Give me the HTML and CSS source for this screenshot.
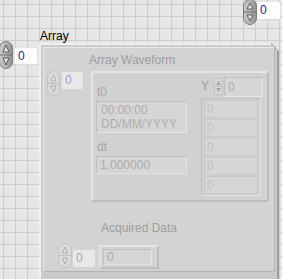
FILE: index.html
```html
<!DOCTYPE html>
<html>
<head>
<meta charset="utf-8">
<link rel="stylesheet" href="styles.css">
</head>
<body>
<div class="panel">
  <div class="ctl num-top">
    <svg class="spin" width="14" height="26" viewBox="0 0 14 26">
      <defs>
        <linearGradient id="g1" x1="0" x2="1" y1="0" y2="0">
          <stop offset="0" stop-color="#c8c8c8"/>
          <stop offset="0.5" stop-color="#b4b4b4"/>
          <stop offset="1" stop-color="#8e8e8e"/>
        </linearGradient>
      </defs>
      <rect x="0.5" y="0.5" width="13" height="25" rx="6.5" fill="url(#g1)" stroke="#7c7c7c"/>
      <line x1="1" y1="13" x2="13" y2="13" stroke="#6e6e6e"/>
      <path d="M7 4 L10 10 L4 10 Z" fill="#e4e4e4" stroke="#505050" stroke-width="0.9"/>
      <path d="M7 22 L10 16 L4 16 Z" fill="#e4e4e4" stroke="#505050" stroke-width="0.9"/>
    </svg>
    <div class="box on">0</div>
  </div>

  <div class="ctl arr">
    <div class="arr-label">Array</div>
    <div class="arr-row">
      <div class="idx">
        <svg class="spin" width="14" height="28" viewBox="0 0 14 28">
          <rect x="0.5" y="0.5" width="13" height="27" rx="6.5" fill="url(#g1)" stroke="#7c7c7c"/>
          <line x1="1" y1="14" x2="13" y2="14" stroke="#6e6e6e"/>
          <path d="M7 4 L10 11 L4 11 Z" fill="#e4e4e4" stroke="#505050" stroke-width="0.9"/>
          <path d="M7 24 L10 17 L4 17 Z" fill="#e4e4e4" stroke="#505050" stroke-width="0.9"/>
        </svg>
        <div class="box on idxbox">0</div>
      </div>
      <div class="frame">
        <div class="corner"></div>
        <div class="elem">
          <div class="lbl wf-label">Array Waveform</div>
          <div class="wf-row">
            <div class="idx dis">
              <svg class="spin" width="13" height="25" viewBox="0 0 13 25">
                <rect x="0.5" y="0.5" width="12" height="24" rx="6" fill="#dadada" stroke="#c2c2c2"/>
                <line x1="1" y1="12.5" x2="12" y2="12.5" stroke="#bdbdbd"/>
                <path d="M6.5 4 L9 10 L4 10 Z" fill="#e2e2e2" stroke="#a8a8a8" stroke-width="0.9"/>
                <path d="M6.5 21 L9 15 L4 15 Z" fill="#e2e2e2" stroke="#a8a8a8" stroke-width="0.9"/>
              </svg>
              <div class="box off idx2">0</div>
            </div>
            <div class="wf">
              <div class="wf-left">
                <div class="lbl sub">t0</div>
                <div class="field t0">
                  <span>00:00:00</span>
                  <span>DD/MM/YYYY</span>
                </div>
                <div class="lbl sub dt">dt</div>
                <div class="field dtf">1,000000</div>
              </div>
              <div class="wf-right">
                <div class="y-head">
                  <span class="lbl ylbl">Y</span>
                  <svg class="yspin" width="9" height="17" viewBox="0 0 9 17">
                    <rect x="0.5" y="0.5" width="8" height="16" fill="#dadada" stroke="#c2c2c2"/>
                    <line x1="1" y1="8.5" x2="8" y2="8.5" stroke="#bdbdbd"/>
                    <path d="M4.5 2.5 L7 7 L2 7 Z" fill="#a8a8a8"/>
                    <path d="M4.5 14.5 L7 10 L2 10 Z" fill="#a8a8a8"/>
                  </svg>
                  <div class="field ybox">0</div>
                </div>
                <div class="ycol">
                  <div class="cell">0</div>
                  <div class="cell">0</div>
                  <div class="cell">0</div>
                  <div class="cell">0</div>
                  <div class="cell">0</div>
                </div>
              </div>
            </div>
          </div>
          <div class="lbl acq-label">Acquired Data</div>
          <div class="acq-row">
            <div class="idx dis">
              <svg class="spin" width="14" height="25" viewBox="0 0 14 25">
                <rect x="0.5" y="0.5" width="13" height="24" rx="6.5" fill="#dadada" stroke="#c2c2c2"/>
                <line x1="1" y1="12.5" x2="13" y2="12.5" stroke="#bdbdbd"/>
                <path d="M7 4 L9.5 10 L4.5 10 Z" fill="#e2e2e2" stroke="#a8a8a8" stroke-width="0.9"/>
                <path d="M7 21 L9.5 15 L4.5 15 Z" fill="#e2e2e2" stroke="#a8a8a8" stroke-width="0.9"/>
              </svg>
              <div class="box off idx3">0</div>
            </div>
            <div class="acq-frame">
              <div class="field acqbox">0</div>
            </div>
          </div>
        </div>
      </div>
    </div>
  </div>
</div>
</body>
</html>
```

FILE: styles.css
```css
* { box-sizing: border-box; }
html, body { margin: 0; padding: 0; }
body {
  width: 282px;
  height: 279px;
  overflow: hidden;
  font-family: "Liberation Sans", Arial, sans-serif;
  font-size: 12px;
  background-color: #e6e6e6;
  background-image:
    linear-gradient(to right, #cdcdcd 1px, transparent 1px),
    linear-gradient(to bottom, #cdcdcd 1px, transparent 1px);
  background-size: 12px 12px;
  background-position: 3px 4px;
}
.panel { position: relative; width: 282px; height: 279px; overflow: hidden; }
.ctl { position: absolute; }
.num-top { left: 243px; top: -1px; display: flex; align-items: flex-start; }
.num-top .box { margin-top: 3px; width: 23px; height: 18px; }

.spin { display: block; flex: none; }
.box {
  height: 17px;
  line-height: 16px;
  padding-left: 3px;
  font-size: 12px;
}
.box.on { background: #fdfdfd; color: #142a8a; border-bottom: 1px solid #dcdcdc; }
.box.off { background: #e8e8e8; color: #98a6cc; }

.arr { left: -1px; top: 30px; }
.arr-label { margin-left: 41px; height: 13px; line-height: 13px; color: #000; }
.arr-row { display: flex; align-items: flex-start; }
.idx { display: flex; align-items: flex-start; }
.arr-row > .idx .spin { margin-top: -2px; }
.idxbox { width: 22px; margin-left: 2px; margin-top: 5px; }

.frame {
  position: relative;
  margin-left: 2px;
  width: 240px;
  height: 240px;
  background: #cacaca;
  border-top: 2px solid #f0f0f0;
  border-left: 2px solid #f0f0f0;
  border-right: 2px solid #9e9e9e;
  padding: 2px 0 0 2px;
}
.corner {
  position: absolute;
  right: -2px;
  top: -2px;
  width: 8px;
  height: 8px;
  background: linear-gradient(225deg, #e6e6e6 0 45%, #bdbdbd 45% 60%, transparent 60%);
}
.elem {
  width: 232px;
  height: 225px;
  background: #d3d3d3;
  border: 1px solid #b4b4b4;
  border-top-color: #e6e6e6;
  border-left-color: #e6e6e6;
  padding: 6px 0 0 3px;
}
.lbl { color: #9e9e9e; line-height: 13px; height: 13px; }
.wf-label { margin-left: 42px; }
.wf-row { display: flex; align-items: flex-start; margin-top: 4px; }
.idx2 { width: 21px; margin-left: 2px; margin-top: 1px; }

.wf {
  margin-left: 8px;
  width: 178px;
  height: 131px;
  border: 2px solid #bdbdbd;
  border-top-color: #e4e4e4;
  border-left-color: #e4e4e4;
  display: flex;
  padding: 13px 0 0 3px;
  background: #d1d1d1;
}
.wf-left { width: 92px; }
.sub { margin-left: 1px; color: #a6a6a6; }
.field {
  background: #d6d6d6;
  border: 1px solid #bfbfbf;
  border-bottom-color: #e4e4e4;
  border-right-color: #e4e4e4;
  color: #adadad;
  padding-left: 3px;
}
.t0 {
  margin-top: 2px;
  width: 91px;
  height: 32px;
  display: flex;
  flex-direction: column;
  font-size: 12px;
  line-height: 14px;
  padding-top: 1px;
  padding-left: 4px;
}
.dt { margin-top: 8px; }
.dtf { margin-top: 2px; width: 91px; height: 18px; line-height: 16px; }

.wf-right { margin-left: 13px; margin-top: -10px; }
.y-head { display: flex; align-items: center; height: 21px; }
.ylbl { color: #ababab; font-weight: bold; width: 13px; line-height: 13px; }
.yspin { display: block; }
.ybox { width: 39px; height: 20px; line-height: 18px; margin-left: 1px; }
.ycol {
  margin-top: 1px;
  width: 60px;
  border: 1px solid #bfbfbf;
  border-bottom-color: #e4e4e4;
  border-right-color: #e4e4e4;
  padding: 1px 2px;
  display: flex;
  flex-direction: column;
  gap: 1px;
}
.cell {
  height: 18px;
  line-height: 17px;
  background: #d6d6d6;
  border: 1px solid #c8c8c8;
  color: #c2c2c2;
  padding-left: 2px;
}

.acq-label { margin-left: 54px; margin-top: 20px; }
.acq-row { display: flex; align-items: flex-start; margin-top: 8px; margin-left: 11px; }
.idx3 { width: 22px; margin-left: 1px; margin-top: 7px; }
.acq-frame {
  margin-left: 4px;
  margin-top: 2px;
  width: 60px;
  height: 24px;
  border: 2px solid #bdbdbd;
  border-top-color: #e4e4e4;
  border-left-color: #e4e4e4;
  padding: 2px;
}
.acqbox { width: 49px; height: 16px; line-height: 14px; }
```
